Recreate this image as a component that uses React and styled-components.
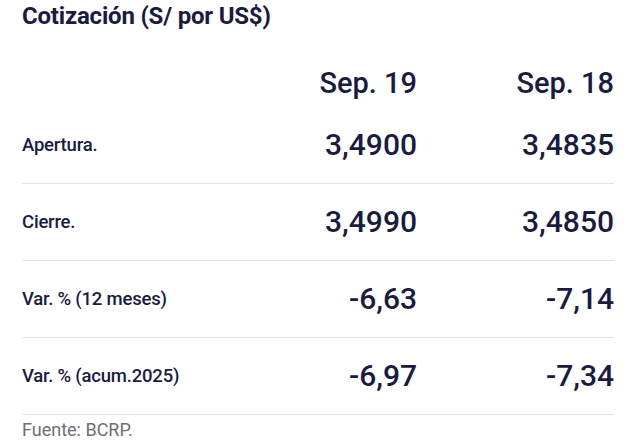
import React from "react";
import styled, { createGlobalStyle } from "styled-components";

const GlobalStyle = createGlobalStyle`
  body {
    margin: 0;
    background: #ffffff;
    font-family: Roboto, "Liberation Sans", Arial, sans-serif;
    color: #1a1b42;
  }
`;

const Container = styled.div`
  padding: 1px 12px 0 22px;
  width: 626px;
  box-sizing: border-box;
`;

const Title = styled.h1`
  margin: 0;
  font-size: 24px;
  line-height: 30px;
  font-weight: 700;
  color: #1a1b42;
  letter-spacing: -0.2px;
`;

const Row = styled.div`
  display: grid;
  grid-template-columns: 1fr 200px 197px;
  align-items: center;
  height: ${(p) => (p.$head ? "48px" : "76px")};
  padding-top: ${(p) => (p.$head ? "28px" : "0")};
  border-bottom: ${(p) => (p.$head ? "none" : "1px solid #e2e2e4")};
`;

const Label = styled.div`
  font-size: 18.5px;
  font-weight: 500;
  letter-spacing: -0.2px;
  color: #1a1b42;
`;

const Value = styled.div`
  text-align: right;
  font-size: ${(p) => (p.$head ? "29px" : "30px")};
  line-height: 34px;
  font-weight: 500;
  color: #1a1b42;
`;

const Source = styled.div`
  margin-top: 5px;
  font-size: 18px;
  line-height: 20px;
  color: #6f6f73;
`;

const rows = [
  { label: "Apertura.", a: "3,4900", b: "3,4835" },
  { label: "Cierre.", a: "3,4990", b: "3,4850" },
  { label: "Var. % (12 meses)", a: "-6,63", b: "-7,14" },
  { label: "Var. % (acum.2025)", a: "-6,97", b: "-7,34" },
];

function App() {
  return (
    <Container>
      <GlobalStyle />
      <Title>Cotización (S/ por US$)</Title>
      <Row $head>
        <div />
        <Value $head>Sep. 19</Value>
        <Value $head>Sep. 18</Value>
      </Row>
      {rows.map((r) => (
        <Row key={r.label}>
          <Label>{r.label}</Label>
          <Value>{r.a}</Value>
          <Value>{r.b}</Value>
        </Row>
      ))}
      <Source>Fuente: BCRP.</Source>
    </Container>
  );
}

export default App;
